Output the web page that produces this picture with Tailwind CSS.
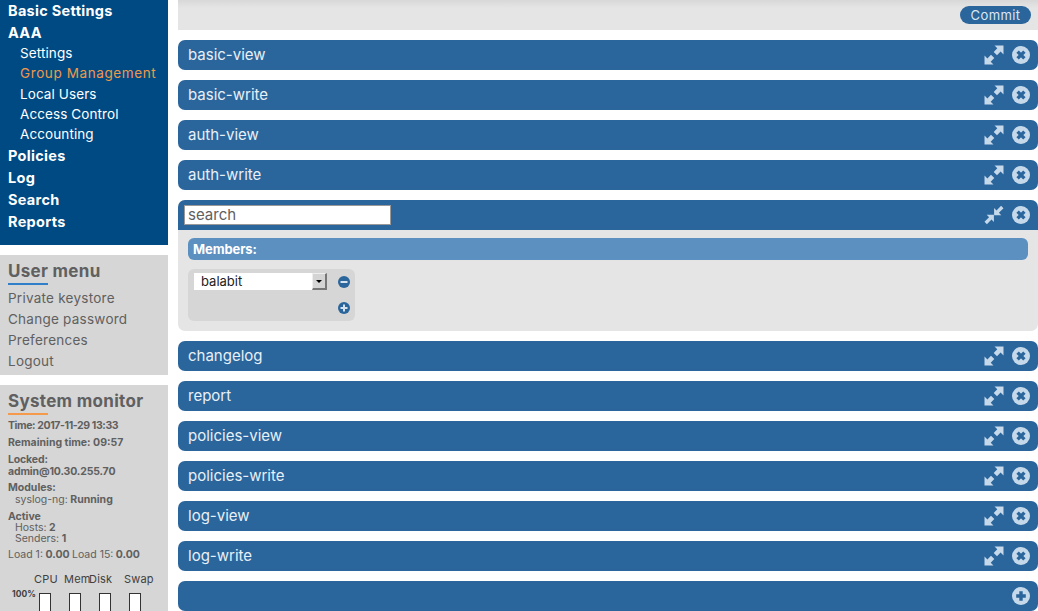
<!DOCTYPE html>
<html lang="en">
<head>
    <meta charset="UTF-8">
    <title>Group Management</title>
    <script src="https://cdn.jsdelivr.net/npm/@tailwindcss/browser@4"></script>
</head>
<body class="bg-white h-[611px] w-[1038px] overflow-hidden font-['Inter',sans-serif]">
    <svg class="hidden">
        <symbol id="expand" viewBox="0 0 20 20">
            <path fill="#c5d9ea" d="M10.5 0.5h9v9l-2.9-2.9-3.6 3.6 -3.3 -3.3 3.6-3.6zM9.5 19.5h-9v-9l2.9 2.9 3.6-3.6 3.3 3.3-3.6 3.6z"/>
        </symbol>
        <symbol id="shrink" viewBox="0 0 20 20">
            <path fill="#c5d9ea" d="M19.5 3.2l-4.6 4.6 2.4 2.4h-7.2V3l2.4 2.4 4.6-4.6zM0.5 16.8l4.6-4.6-2.4-2.4h7.2V17l-2.4-2.4-4.6 4.6z"/>
        </symbol>
        <symbol id="close" viewBox="0 0 18 18">
            <circle cx="9" cy="9" r="9" fill="#c5d9ea"/>
            <path stroke="#2a659c" stroke-width="3.4" d="M5.6 5.6l6.8 6.8M12.4 5.6l-6.8 6.8"/>
        </symbol>
        <symbol id="plus" viewBox="0 0 18 18">
            <circle cx="9" cy="9" r="9" fill="#c5d9ea"/>
            <path stroke="#2a659c" stroke-width="3.4" d="M9 4.2v9.6M4.2 9h9.6"/>
        </symbol>
    </svg>

    <div class="flex gap-[10px] items-start">
        <!-- sidebar -->
        <div class="w-[168px] shrink-0 flex flex-col gap-[10px]">
            <div class="bg-[#004a84] h-[245px] text-white">
                <div class="px-2 font-bold text-[14.5px] leading-[22px] tracking-[0.3px]">Basic Settings</div>
                <div class="px-2 font-bold text-[14.5px] leading-[22px] tracking-[0.3px]">AAA</div>
                <div class="pl-5 -mt-px pb-px text-[13.5px] leading-[20.25px] tracking-[0.1px]">
                    <div>Settings</div>
                    <div class="text-[#f0984a] tracking-[0.6px]">Group Management</div>
                    <div>Local Users</div>
                    <div>Access Control</div>
                    <div>Accounting</div>
                </div>
                <div class="px-2 font-bold text-[14.5px] leading-[22px] tracking-[0.3px]">Policies</div>
                <div class="px-2 font-bold text-[14.5px] leading-[22px] tracking-[0.3px]">Log</div>
                <div class="px-2 font-bold text-[14.5px] leading-[22px] tracking-[0.3px]">Search</div>
                <div class="px-2 font-bold text-[14.5px] leading-[22px] tracking-[0.3px]">Reports</div>
            </div>

            <div class="bg-[#d6d6d6] h-[120px] px-2 pt-[6px] text-[#606060]">
                <div class="font-bold text-[17px] leading-[20px] tracking-[0.3px]">User menu</div>
                <div class="w-10 h-[2px] bg-[#2f80c9] mt-[2px] mb-[3px]"></div>
                <div class="text-[13.5px] leading-[21px] tracking-[0.25px]">
                    <div>Private keystore</div>
                    <div>Change password</div>
                    <div>Preferences</div>
                    <div>Logout</div>
                </div>
            </div>

            <div class="bg-[#d6d6d6] h-[226px] overflow-hidden px-2 pt-[6px] text-[#606060]">
                <div class="font-bold text-[17px] leading-[20px] tracking-[0.3px]">System monitor</div>
                <div class="w-10 h-[2px] bg-[#f59a4a] mt-[2px] mb-[4px]"></div>
                <div class="text-[10.5px] leading-[11.5px] font-bold">
                    <div class="py-px tracking-[-0.4px]">Time: 2017-11-29 13:33</div>
                    <div class="mt-[4px]">Remaining time: 09:57</div>
                    <div class="mt-[6px] tracking-[-0.15px]">Locked:<br>admin@10.30.255.70</div>
                    <div class="mt-[5px]">Modules:</div>
                    <div class="pl-[7px] leading-[11px]"><span class="font-normal">syslog-ng:</span> Running</div>
                    <div class="mt-[6px] leading-[11px]">Active</div>
                    <div class="pl-[7px] leading-[11px]"><span class="font-normal">Hosts:</span> 2</div>
                    <div class="pl-[7px]"><span class="font-normal">Senders:</span> 1</div>
                    <div class="mt-[5px] leading-[11px]"><span class="font-normal">Load 1:</span> 0.00 <span class="font-normal">Load 15:</span> 0.00</div>
                </div>
                <div class="flex pl-[26px] mt-[12px] text-[11px] leading-[14px] tracking-[0.2px] text-[#404040]">
                    <div class="w-[30px]">CPU</div>
                    <div class="w-[25px]">Mem</div>
                    <div class="w-[35px]">Disk</div>
                    <div>Swap</div>
                </div>
                <div class="flex items-start mt-[7px]">
                    <div class="w-[31px] text-[8.5px] font-bold leading-[10px] pl-1 text-[#404040] mt-[-4px]">100%</div>
                    <div class="flex gap-[18px]">
                        <div class="w-3 h-[40px] bg-white border border-[#333]"></div>
                        <div class="w-3 h-[40px] bg-white border border-[#333]"></div>
                        <div class="w-3 h-[40px] bg-white border border-[#333]"></div>
                        <div class="w-3 h-[40px] bg-white border border-[#333]"></div>
                    </div>
                </div>
            </div>
        </div>

        <!-- main -->
        <div class="flex-1 flex flex-col gap-[10px]">
            <div class="h-[30px] bg-[#e5e5e5] flex items-end justify-end px-[7px] pb-[6px] bg-gradient-to-b from-[#d8d8d8] to-[#e5e5e5] to-[8px]">
                <button class="h-[18px] w-[71px] rounded-full bg-[#2a659c] text-[#dbe7f2] text-[13px] leading-[18px] tracking-[0.4px]">Commit</button>
            </div>

            <div class="h-[30px] rounded-[7px] bg-[#2a659c] flex items-center pl-[10px] pr-2 text-[#e8f0f7] text-[15px]">
                <span class="flex-1">basic-view</span>
                <svg class="w-5 h-5 mr-2"><use href="#expand"/></svg>
                <svg class="w-[18px] h-[18px]"><use href="#close"/></svg>
            </div>
            <div class="h-[30px] rounded-[7px] bg-[#2a659c] flex items-center pl-[10px] pr-2 text-[#e8f0f7] text-[15px]">
                <span class="flex-1">basic-write</span>
                <svg class="w-5 h-5 mr-2"><use href="#expand"/></svg>
                <svg class="w-[18px] h-[18px]"><use href="#close"/></svg>
            </div>
            <div class="h-[30px] rounded-[7px] bg-[#2a659c] flex items-center pl-[10px] pr-2 text-[#e8f0f7] text-[15px]">
                <span class="flex-1">auth-view</span>
                <svg class="w-5 h-5 mr-2"><use href="#expand"/></svg>
                <svg class="w-[18px] h-[18px]"><use href="#close"/></svg>
            </div>
            <div class="h-[30px] rounded-[7px] bg-[#2a659c] flex items-center pl-[10px] pr-2 text-[#e8f0f7] text-[15px]">
                <span class="flex-1">auth-write</span>
                <svg class="w-5 h-5 mr-2"><use href="#expand"/></svg>
                <svg class="w-[18px] h-[18px]"><use href="#close"/></svg>
            </div>

            <!-- open group -->
            <div class="h-[131px] rounded-[7px] bg-[#e5e5e5] overflow-hidden">
                <div class="h-[30px] bg-[#2a659c] flex items-center pl-[6px] pr-2">
                    <div class="flex-1">
                        <input value="search" class="block w-[207px] h-5 bg-white border border-[#999] px-[3px] text-[15px] text-[#606060] outline-none">
                    </div>
                    <svg class="w-5 h-5 mr-2"><use href="#shrink"/></svg>
                    <svg class="w-[18px] h-[18px]"><use href="#close"/></svg>
                </div>
                <div class="px-[10px] pt-2">
                    <div class="h-[22px] rounded-[6px] bg-[#5b90c0] text-white font-bold text-[13px] leading-[22px] px-[5px] tracking-[-0.1px]">Members:</div>
                    <div class="w-[167px] h-[52px] mt-[9px] rounded-[6px] bg-[#d6d6d6] relative">
                        <div class="absolute left-[6px] top-[4px] w-[133px] h-[17px] bg-white flex">
                            <span class="flex-1 pl-[7px] text-[13px] leading-[17px] text-[#222]">balabit</span>
                            <span class="w-[15px] h-[17px] bg-[#d4d4d4] border-t border-l border-t-[#eee] border-l-[#eee] border-r-2 border-b-2 border-r-[#777] border-b-[#777] flex items-center justify-center">
                                <span class="w-0 h-0 border-x-[3px] border-x-transparent border-t-[3px] border-t-black"></span>
                            </span>
                        </div>
                        <svg class="absolute left-[150px] top-[7px] w-3 h-3" viewBox="0 0 12 12"><circle cx="6" cy="6" r="6" fill="#2a659c"/><path stroke="#d6e3ef" stroke-width="2" d="M2.5 6h7"/></svg>
                        <svg class="absolute left-[150px] top-[33px] w-3 h-3" viewBox="0 0 12 12"><circle cx="6" cy="6" r="6" fill="#2a659c"/><path stroke="#d6e3ef" stroke-width="2" d="M2.5 6h7M6 2.5v7"/></svg>
                    </div>
                </div>
            </div>

            <div class="h-[30px] rounded-[7px] bg-[#2a659c] flex items-center pl-[10px] pr-2 text-[#e8f0f7] text-[15px]">
                <span class="flex-1">changelog</span>
                <svg class="w-5 h-5 mr-2"><use href="#expand"/></svg>
                <svg class="w-[18px] h-[18px]"><use href="#close"/></svg>
            </div>
            <div class="h-[30px] rounded-[7px] bg-[#2a659c] flex items-center pl-[10px] pr-2 text-[#e8f0f7] text-[15px]">
                <span class="flex-1">report</span>
                <svg class="w-5 h-5 mr-2"><use href="#expand"/></svg>
                <svg class="w-[18px] h-[18px]"><use href="#close"/></svg>
            </div>
            <div class="h-[30px] rounded-[7px] bg-[#2a659c] flex items-center pl-[10px] pr-2 text-[#e8f0f7] text-[15px]">
                <span class="flex-1">policies-view</span>
                <svg class="w-5 h-5 mr-2"><use href="#expand"/></svg>
                <svg class="w-[18px] h-[18px]"><use href="#close"/></svg>
            </div>
            <div class="h-[30px] rounded-[7px] bg-[#2a659c] flex items-center pl-[10px] pr-2 text-[#e8f0f7] text-[15px]">
                <span class="flex-1">policies-write</span>
                <svg class="w-5 h-5 mr-2"><use href="#expand"/></svg>
                <svg class="w-[18px] h-[18px]"><use href="#close"/></svg>
            </div>
            <div class="h-[30px] rounded-[7px] bg-[#2a659c] flex items-center pl-[10px] pr-2 text-[#e8f0f7] text-[15px]">
                <span class="flex-1">log-view</span>
                <svg class="w-5 h-5 mr-2"><use href="#expand"/></svg>
                <svg class="w-[18px] h-[18px]"><use href="#close"/></svg>
            </div>
            <div class="h-[30px] rounded-[7px] bg-[#2a659c] flex items-center pl-[10px] pr-2 text-[#e8f0f7] text-[15px]">
                <span class="flex-1">log-write</span>
                <svg class="w-5 h-5 mr-2"><use href="#expand"/></svg>
                <svg class="w-[18px] h-[18px]"><use href="#close"/></svg>
            </div>
            <div class="h-[30px] rounded-[7px] bg-[#2a659c] flex items-center justify-end pr-2">
                <svg class="w-[18px] h-[18px]"><use href="#plus"/></svg>
            </div>
        </div>
    </div>
</body>
</html>
